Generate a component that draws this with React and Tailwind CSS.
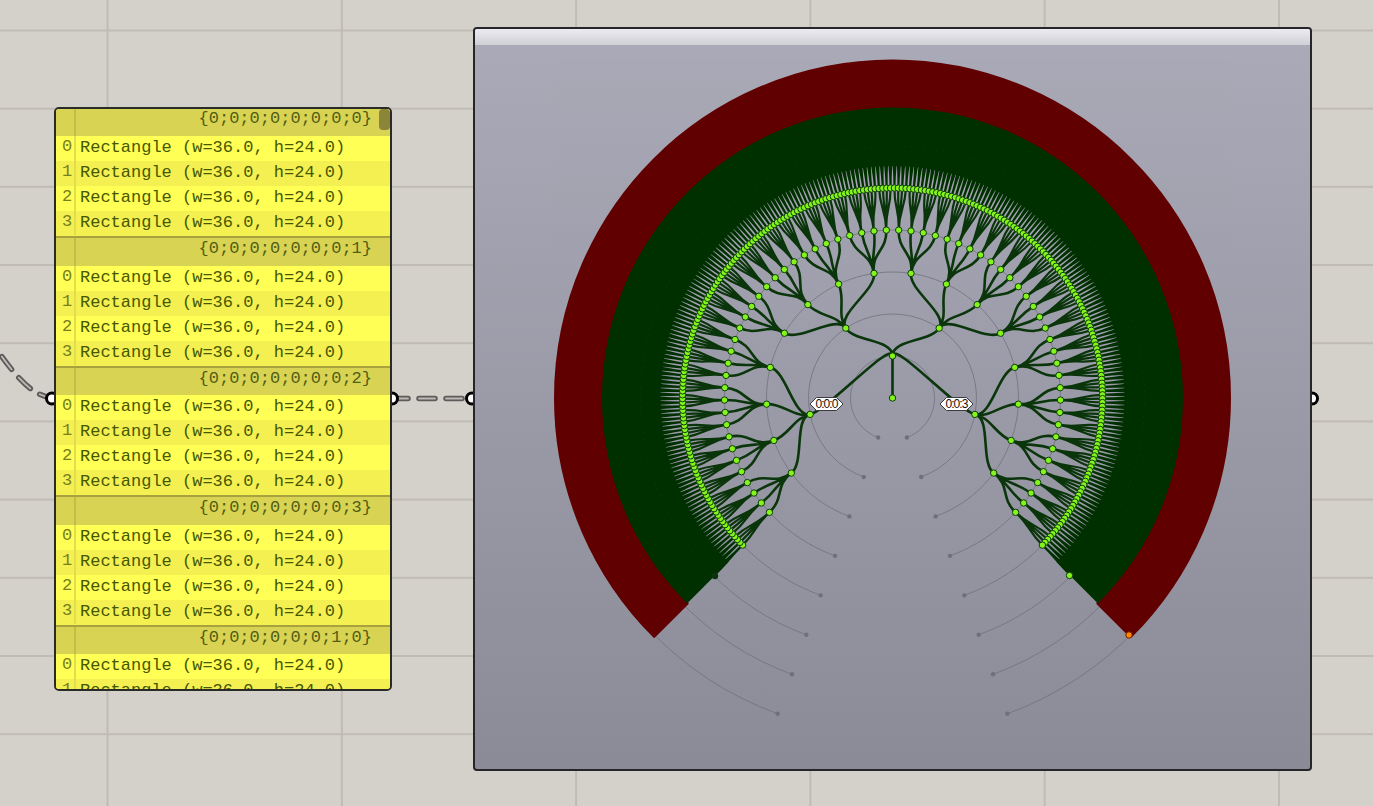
const CX = 892.5, CY = 398;
const A0 = -135, SPAN = 270;
const pt = (r, deg) => {
  const a = (deg * Math.PI) / 180;
  return [CX + r * Math.sin(a), CY - r * Math.cos(a)];
};
const f = (n) => n.toFixed(2);
const levels = [[], [], [], [], [], [], []];
const nodes = [[], [], [], [], [], [], []];
function grow(level, lo, hi, parentAngle) {
  const K = level >= 3 ? 0.5 : 0.4;
  const r0 = level * 42;
  const r1 = (level + 1) * 42;
  const a = level === 0 ? 0 : (lo + hi) / 2;
  const p0 = pt(r0, parentAngle);
  const p1 = pt(r0 + 42 * K, parentAngle);
  const p2 = pt(r1 - 42 * K, a);
  const p3 = pt(r1, a);
  levels[level].push(`M${f(p0[0])} ${f(p0[1])}C${f(p1[0])} ${f(p1[1])} ${f(p2[0])} ${f(p2[1])} ${f(p3[0])} ${f(p3[1])}`);
  nodes[level + 1].push(p3);
  if (level + 1 >= 6) return;
  const w = (hi - lo) / 4;
  for (let i = 0; i < 4; i++) grow(level + 1, lo + i * w, lo + (i + 1) * w, a);
}
grow(0, A0, A0 + SPAN, 0);
const sector = (r0, r1, deg) => {
  const [ax, ay] = pt(r1, -deg), [bx, by] = pt(r1, deg), [cx, cy] = pt(r0, deg), [dx, dy] = pt(r0, -deg);
  return `M${f(ax)} ${f(ay)}A${r1} ${r1} 0 1 1 ${f(bx)} ${f(by)}L${f(cx)} ${f(cy)}A${r0} ${r0} 0 1 0 ${f(dx)} ${f(dy)}Z`;
};
const arc = (r, deg) => {
  const [ax, ay] = pt(r, -deg), [bx, by] = pt(r, deg);
  return `M${f(ax)} ${f(ay)}A${r} ${r} 0 1 1 ${f(bx)} ${f(by)}`;
};
const RINGS = [42, 84, 126, 168, 210, 252, 294, 336];
const Hex = ({ x, text }) => (
  <g>
    <path d={`M${x - 16.5} 404L${x - 10} 397.5H${x + 10}L${x + 16.5} 404L${x + 10} 410.5H${x - 10}Z`} fill="#ffffff" stroke="#3b3b3b" strokeWidth="1" />
    <text x={x} y="408.3" textAnchor="middle" fontSize="12" fontFamily="'Liberation Sans', sans-serif" fill="#111111" letterSpacing="-0.9">{text}</text>
  </g>
);
function TreeView() {
  return (
    <svg width="835" height="740" viewBox="475 29 835 740" className="absolute left-0 top-0">
      <g fill="none" stroke="#70707c" strokeWidth="1" opacity="0.75">
        {RINGS.map((r) => <path key={r} d={arc(r, 160)} />)}
      </g>
      <g fill="#70707c">
        {RINGS.flatMap((r) => [-160, 160].map((d) => {
          const [x, y] = pt(r, d);
          return <circle key={`${r}${d}`} cx={x} cy={y} r="2.2" />;
        }))}
      </g>
      <path d={sector(290.5, 337, 135)} fill="#600000" stroke="#600000" strokeWidth="3" strokeLinejoin="round" />
      <path d={sector(232, 290.5, 135)} fill="#003000" />
      <path d={levels[5].join("")} fill="none" stroke="#003000" strokeWidth="2.1" />
      <path d={arc(252, 135)} fill="none" stroke="#0b3d0b" strokeWidth="1" strokeDasharray="1.5 5" />
      <path d={levels[4].join("")} fill="none" stroke="#0a350a" strokeWidth="2.2" />
      <path d={levels.slice(0, 4).flat().join("")} fill="none" stroke="#0b360b" strokeWidth="2.6" />
      <Hex x={826.5} text="0:0:0" />
      <Hex x={956.5} text="0:0:3" />
      <g fill="#84f51c" stroke="#0f3a0f" strokeWidth="1">
        {nodes.slice(1, 6).flat().map(([x, y], i) => <circle key={i} cx={x} cy={y} r="3.2" />)}
        <circle cx={CX} cy={CY} r="3.2" />
      </g>
      <circle cx="715" cy="576" r="3.2" fill="#0a350a" />
      <circle cx="1069.5" cy="575.5" r="3.2" fill="#84f51c" stroke="#0f3a0f" />
      <circle cx="1129" cy="635" r="3.2" fill="#ff8a00" stroke="#7a1500" />
    </svg>
  );
}
const GROUPS = [
  { path: "0;0;0;0;0;0;0;0", rows: [0, 1, 2, 3] },
  { path: "0;0;0;0;0;0;0;1", rows: [0, 1, 2, 3] },
  { path: "0;0;0;0;0;0;0;2", rows: [0, 1, 2, 3] },
  { path: "0;0;0;0;0;0;0;3", rows: [0, 1, 2, 3] },
  { path: "0;0;0;0;0;0;1;0", rows: [0, 1] },
];
function Row({ i }) {
  return (
    <div className={`flex h-[25px] shrink-0 items-center ${i % 2 ? "bg-[#f5f052]" : "bg-[#ffff55]"}`}>
      <div className="-mt-[2px] h-[25px] w-[20px] border-r-2 border-[#e3dd4c] pl-[6px] leading-[23px] text-[#77801a]">{i}</div>
      <div className="-mt-[2px] pl-[4px] leading-[23px] text-[#455800]">Rectangle (w=36.0, h=24.0)</div>
    </div>
  );
}
function Panel() {
  return (
    <div className="absolute left-[54px] top-[107px] flex h-[584px] w-[338px] flex-col overflow-hidden rounded-[5px] border-2 border-[#2a2a26] bg-[#ffff55] font-['Liberation_Mono',monospace] text-[17px]">
      {GROUPS.map((g, gi) => (
        <div key={g.path} className="flex shrink-0 flex-col">
          <div className={`relative flex shrink-0 justify-end bg-[#d9d353] pr-[18px] text-[#515e14] ${gi ? "h-[29.6px] border-t-2 border-[#a8a23e] pt-[1px]" : "h-[27px]"}`}>
            <div className="absolute bottom-0 left-0 top-0 w-[20px] border-r-2 border-[#c4be48]" />
            <span className="leading-[20px]">{`{${g.path}}`}</span>
          </div>
          {g.rows.map((i) => <Row key={i} i={i} />)}
        </div>
      ))}
      <div className="absolute right-0 top-0 h-[21px] w-[11px] rounded-[4px] bg-[#8a8538]" />
    </div>
  );
}
export default function App() {
  return (
    <div className="relative h-[806px] w-[1373px] overflow-hidden bg-[#d4d0ca] bg-[linear-gradient(to_right,#c0bcb5_1.5px,transparent_1.5px),linear-gradient(to_bottom,#c0bcb5_1.5px,transparent_1.5px)] bg-[size:234.3px_78.2px] bg-[position:106.5px_29.5px]">
      <svg width="1373" height="806" className="absolute left-0 top-0">
        <path d="M52 398C38 396 24 388 0 354" fill="none" stroke="#5c5c5a" strokeWidth="5.5" strokeDasharray="16 11" strokeDashoffset="3" strokeLinecap="round" />
        <path d="M52 398C38 396 24 388 0 354" fill="none" stroke="#bdbab5" strokeWidth="1.8" strokeDasharray="16 11" strokeDashoffset="3" strokeLinecap="round" />
        <path d="M392 398.5H472" fill="none" stroke="#5c5c5a" strokeWidth="5.5" strokeDasharray="16 11" strokeLinecap="round" />
        <path d="M392 398.5H472" fill="none" stroke="#bdbab5" strokeWidth="1.8" strokeDasharray="16 11" strokeLinecap="round" />
        {[[52, 398.5], [392, 398.5], [472, 398.5], [1312, 398.5]].map(([x, y]) => (
          <circle key={x} cx={x} cy={y} r="5.5" fill="#ffffff" stroke="#000000" strokeWidth="3" />
        ))}
      </svg>
      <Panel />
      <div className="absolute left-[473px] top-[27px] h-[744px] w-[839px] overflow-hidden rounded-[4px] border-2 border-[#26262a] bg-[linear-gradient(to_bottom,#aaaab8,#8b8b98)]">
        <div className="h-[16px] bg-[linear-gradient(to_bottom,#ececf0,#cfcfd6)]" />
        <TreeView />
      </div>
    </div>
  );
}
